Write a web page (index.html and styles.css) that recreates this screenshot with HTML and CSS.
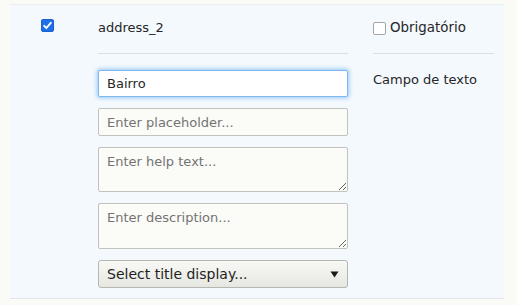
FILE: index.html
```html
<!DOCTYPE html>
<html lang="pt">
<head>
  <meta charset="UTF-8">
  <title>Campo address_2</title>
  <link rel="stylesheet" href="styles.css">
</head>
<body>

  <!-- Field editor row -->
  <div class="panel">
    <div class="col-check">
      <span class="check on">
        <svg width="13" height="13" viewBox="0 0 13 13"><path d="M3.2 6.8 L5.4 9 L9.8 3.8" fill="none" stroke="#fff" stroke-width="1.9" stroke-linecap="round" stroke-linejoin="round"/></svg>
      </span>
    </div>

    <div class="col-main">
      <div class="head">address_2</div>
      <div class="fields">
        <input class="text focus" type="text" value="Bairro">
        <input class="text" type="text" placeholder="Enter placeholder...">
        <textarea class="area" placeholder="Enter help text..."></textarea>
        <textarea class="area" placeholder="Enter description..."></textarea>
        <div class="select-wrap">
          <select class="select">
            <option>Select title display...</option>
          </select>
          <svg class="arrow" width="9" height="7" viewBox="0 0 9 7"><path d="M0.5 0.5 H8.5 L4.5 6.5 Z" fill="#1a1a1a"/></svg>
        </div>
      </div>
    </div>

    <div class="col-side">
      <div class="head"><span class="check"></span>Obrigatório</div>
      <div class="type">Campo de texto</div>
    </div>
  </div>

</body>
</html>
```
FILE: styles.css
```css
/* Basic setup */
* {
  margin: 0;
  padding: 0;
  box-sizing: border-box;
}

body {
  background: #fafaf6;
  font-family: "DejaVu Sans", sans-serif;
  font-size: 13px;
  color: #262626;
}

/* Light blue row */
.panel {
  display: flex;
  margin: 4px 0 0 10px;
  width: 494px;
  background: #f4f9fe;
  border-top: 1px solid #eceeee;
  border-bottom: 1px solid #e3e5e5;
  padding: 0 0 10px 31px;
}

.col-check {
  width: 57px;
  padding-top: 14px;
}

.col-main {
  width: 250px;
}

.col-side {
  width: 121px;
  margin-left: 25px;
}

/* Header line with name / required */
.head {
  display: flex;
  align-items: center;
  height: 49px;
  padding-bottom: 2px;
  border-bottom: 1px solid #dcdfe2;
  line-height: 16px;
}

.col-side .head {
  font-size: 13.4px;
}

/* Checkboxes */
.check {
  display: inline-block;
  width: 13px;
  height: 13px;
  border: 1px solid #a5a5a5;
  border-radius: 2px;
  background: #fff;
  margin-right: 4px;
  flex-shrink: 0;
}
.check.on {
  background: #1f6fe6;
  border-color: #1a62d0;
}
.check.on svg {
  display: block;
  margin: -1px;
}

/* Inputs */
.fields {
  display: flex;
  flex-direction: column;
  gap: 11px;
  padding-top: 16px;
}

.text,
.area {
  display: block;
  width: 250px;
  border: 1px solid #c2c2be;
  border-radius: 2px;
  background: #fbfbf8;
  font-family: "DejaVu Sans", sans-serif;
  font-size: 13px;
  line-height: 16px;
  color: #262626;
  padding: 0 8px;
  outline: none;
}
.text {
  height: 28px;
}
.text.focus {
  height: 27px;
  background: #fff;
  border-color: #7fb8ee;
  box-shadow: 0 0 4px 1px rgba(96, 170, 240, 0.65);
}
.area {
  height: 45px;
  padding-top: 6px;
  resize: vertical;
}
.area + .area {
  height: 46px;
}

::placeholder {
  color: #737373;
}

/* Select */
.select-wrap {
  position: relative;
}
.select {
  appearance: none;
  display: block;
  width: 250px;
  height: 28px;
  border: 1px solid #b5b5b1;
  border-radius: 3px;
  background: linear-gradient(#f8f8f5, #e7e7e2);
  font-family: "DejaVu Sans", sans-serif;
  font-size: 14px;
  color: #1f1f1f;
  padding: 0 8px;
  outline: none;
}
.arrow {
  position: absolute;
  right: 9px;
  top: 11px;
}

/* Field type label */
.type {
  padding-top: 18px;
  line-height: 16px;
  font-size: 13px;
}
```
